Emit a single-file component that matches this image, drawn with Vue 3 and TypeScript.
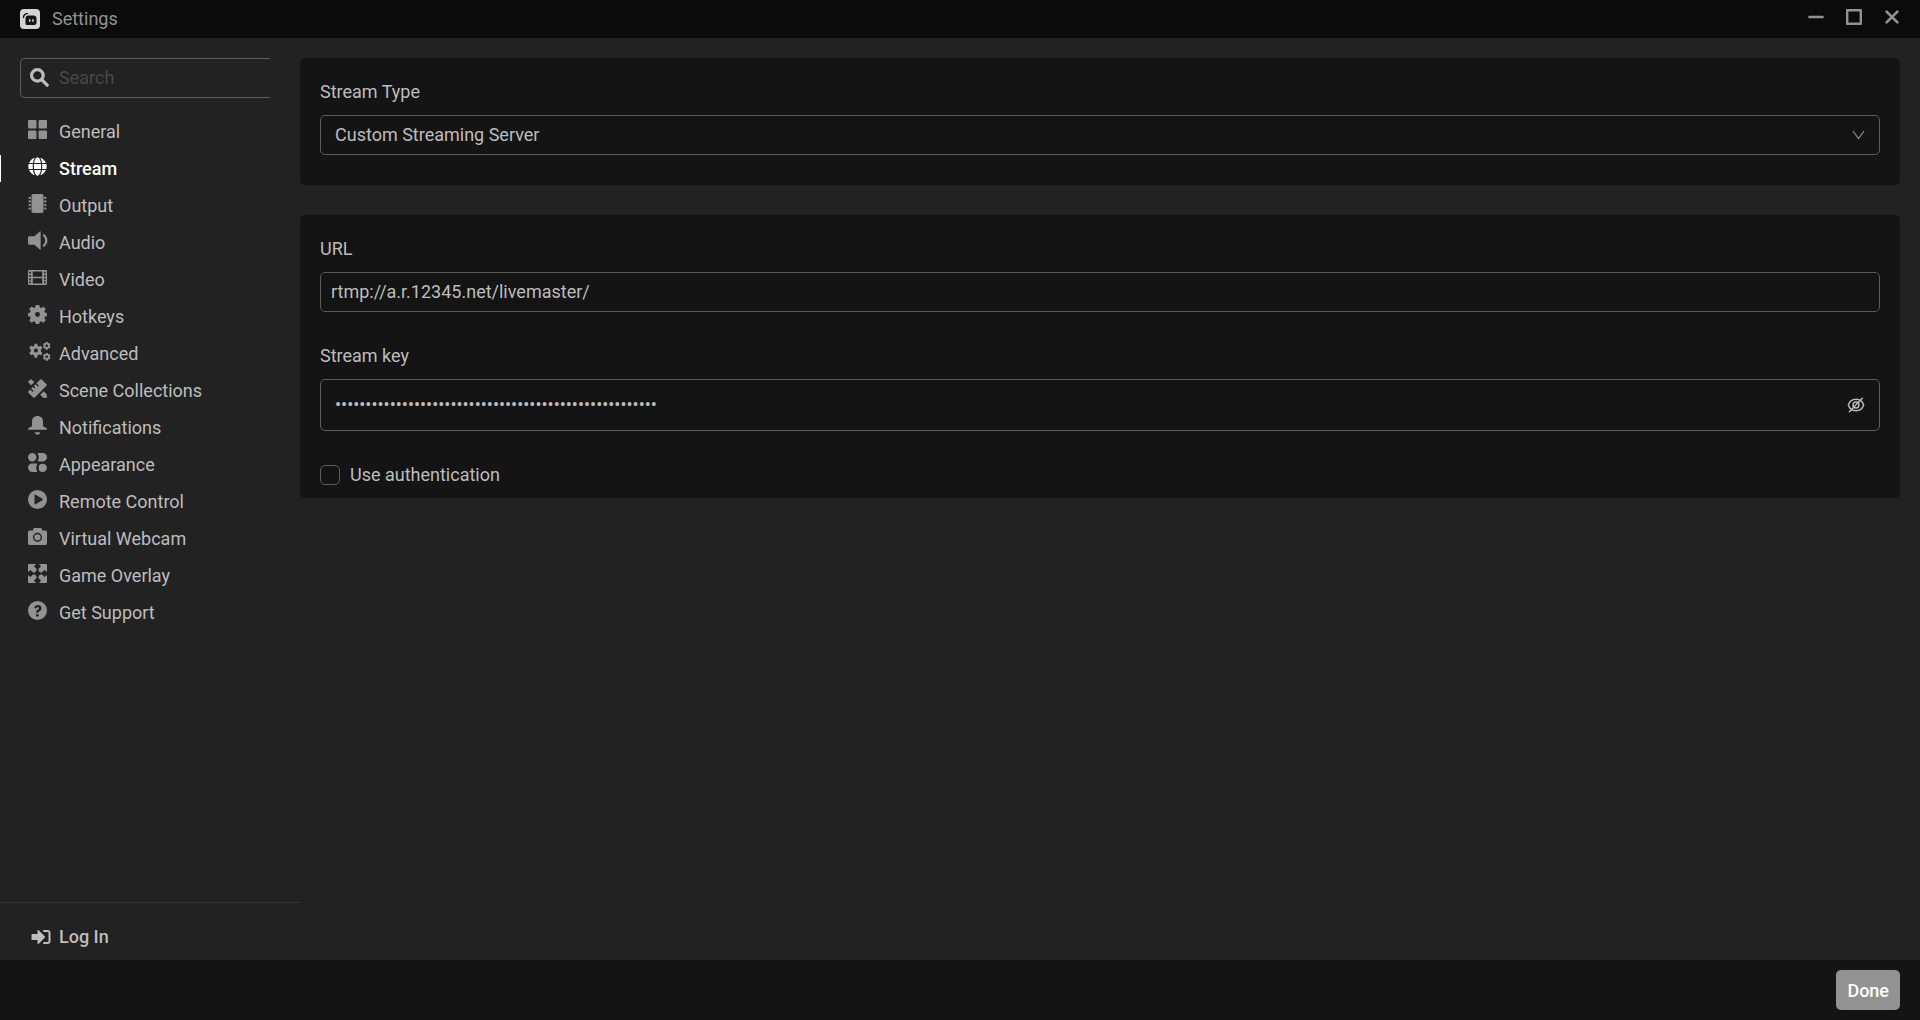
<script setup lang="ts">
import { computed, ref } from 'vue'

interface NavItem {
  label: string
  icon: string
  wide?: boolean
}

const gear =
  'M7.4 0h3.2l.6 2.4 1.3.5 2.1-1.3 2.2 2.2-1.3 2.1.5 1.3 2 .5v2.8l-2 .6-.5 1.4 1.3 2-2.2 2.3-2.1-1.3-1.4.5-.5 2H7.4l-.6-2-1.3-.5-2.1 1.3-2.2-2.2 1.3-2.1-.5-1.4L0 10.500V7.700l2-.6.5-1.300L1.200 3.700l2.200-2.200 2.100 1.300 1.300-.5zM9 6.700a2.300 2.300 0 1 0 0 4.600 2.300 2.300 0 0 0 0-4.600z'

const items: NavItem[] = [
  {
    label: 'General',
    icon: 'M1 0h6a1 1 0 0 1 1 1v6a1 1 0 0 1-1 1H1a1 1 0 0 1-1-1V1a1 1 0 0 1 1-1zM11 0h6a1 1 0 0 1 1 1v6a1 1 0 0 1-1 1h-6a1 1 0 0 1-1-1V1a1 1 0 0 1 1-1zM1 10h6a1 1 0 0 1 1 1v6a1 1 0 0 1-1 1H1a1 1 0 0 1-1-1v-6a1 1 0 0 1 1-1zM11 10h6a1 1 0 0 1 1 1v6a1 1 0 0 1-1 1h-6a1 1 0 0 1-1-1v-6a1 1 0 0 1 1-1z',
  },
  {
    label: 'Stream',
    icon: 'M12.200 5.600C11.800 2.400 10.500.2 9 .2S6.200 2.400 5.800 5.600zM5.600 9c0 .8 0 1.600.1 2.300h6.600a22 22 0 0 0 0-4.600H5.700C5.600 7.400 5.600 8.200 5.600 9zM17 5.600A8.800 8.800 0 0 0 11.500.600c.9 1.200 1.500 3 1.800 5zM6.500.600A8.800 8.800 0 0 0 1 5.600h3.700c.3-2 .9-3.800 1.800-5zM17.400 6.700h-4a23 23 0 0 1 0 4.600h4a9 9 0 0 0 0-4.600zM4.500 9c0-.8 0-1.600.1-2.300h-4a9 9 0 0 0 0 4.600h4C4.500 10.600 4.500 9.800 4.500 9zM5.800 12.400c.4 3.200 1.700 5.400 3.200 5.400s2.800-2.200 3.200-5.400zM11.500 17.400a8.800 8.800 0 0 0 5.500-5h-3.700c-.3 2-.9 3.800-1.800 5zM1 12.400a8.800 8.800 0 0 0 5.500 5c-.9-1.200-1.500-3-1.800-5z',
  },
  {
    label: 'Output',
    icon: 'M5 0h8a1.700 1.700 0 0 1 1.700 1.700v14.600A1.700 1.700 0 0 1 13 18H5a1.700 1.700 0 0 1-1.700-1.700V1.700A1.700 1.700 0 0 1 5 0zM.4 3.300l1-.6h1.200v2H1.400l-1-.6zM.4 6.600l1-.6h1.200v2H1.400l-1-.6zM.4 10l1-.6h1.200v2H1.400l-1-.6zM.4 13.400l1-.6h1.200v2H1.400l-1-.6zM17.600 3.300l-1-.6h-1.200v2h1.200l1-.6zM17.600 6.600l-1-.6h-1.200v2h1.200l1-.6zM17.600 10l-1-.6h-1.200v2h1.200l1-.6zM17.600 13.400l-1-.6h-1.200v2h1.200l1-.6z',
  },
  {
    label: 'Audio',
    icon: 'M11 .7c.6-.7 1-.5 1 .3v16c0 .8-.4 1-1 .4L6 13H1.200A1.200 1.200 0 0 1 0 11.800V6.200A1.200 1.200 0 0 1 1.200 5H6zM13.900 4.600l.9-1.900a7.300 7.300 0 0 1 0 12.600l-.9-1.900a5.300 5.300 0 0 0 0-8.800z',
  },
  {
    label: 'Video',
    icon: 'M1 2h16a1 1 0 0 1 1 1v12a1 1 0 0 1-1 1H1a1 1 0 0 1-1-1V3a1 1 0 0 1 1-1zM1.200 3.500v1.800h1.600V3.500zM1.200 6.600v1.800h1.600V6.600zM1.200 9.700v1.800h1.600V9.700zM1.200 12.800v1.700h1.600v-1.700zM15.200 3.500v1.800h1.600V3.500zM15.200 6.600v1.800h1.600V6.600zM15.200 9.700v1.800h1.600V9.700zM15.200 12.800v1.700h1.600v-1.700zM4.500 3.300v5h9v-5zM4.500 9.600v5.100h9V9.600z',
  },
  { label: 'Hotkeys', icon: gear },
  {
    label: 'Advanced',
    wide: true,
    icon: 'M6.600 1.200h2.600l.4 2 1.500.8 1.900-.7 1.400 2.400-1.500 1.400v2l1.500 1.300-1.400 2.400-1.900-.7-1.500.8-.4 2.300H6.600l-.4-2.300-1.500-.8-1.900.7-1.600-2.400 1.500-1.300v-2L1.200 5.700l1.600-2.400 1.900.7 1.500-.8zM7.900 6.100a2 2 0 1 0 0 4 2 2 0 0 0 0-4zM17.800-.5h1.900l.4 1.300 1.400-.3 1 1.700-1 1.100 1 1.100-1 1.700-1.400-.3-.4 1.400h-1.900l-.5-1.400-1.400.3-1-1.700 1-1.100-1-1.100 1-1.700 1.400.3zM18.700 2a1.300 1.300 0 1 0 0 2.600 1.300 1.300 0 0 0 0-2.600zM17.800 10.500h1.900l.4 1.300 1.400-.3 1 1.700-1 1.100 1 1.100-1 1.700-1.400-.3-.4 1.400h-1.900l-.5-1.400-1.400.3-1-1.700 1-1.100-1-1.100 1-1.700 1.400.3zM18.700 13a1.300 1.300 0 1 0 0 2.600 1.300 1.300 0 0 0 0-2.600z',
  },
  {
    label: 'Scene Collections',
    icon: 'M13 .4 17.600 5a1 1 0 0 1 0 1.300L6.300 17.600a1 1 0 0 1-1.300 0L.4 13a1 1 0 0 1 0-1.300l1.700-1.700 2.300 2.300.9-.9-2.300-2.300L4.600 7.500l1.500 1.500.9-.9-1.500-1.500L7.100 5l2.300 2.300.9-.9L8 4.100 11.700.4a1 1 0 0 1 1.300 0zM3.400.4 6 3 3 6 .4 3.400a1 1 0 0 1 0-1.200L2.200.4a1 1 0 0 1 1.200 0zM15 11.500l2.500 2.600.5 3.100a.8.8 0 0 1-.9.8l-3.100-.5-2.500-2.500z',
  },
  {
    label: 'Notifications',
    icon: 'M9 0c3.200 0 5.200 2.200 5.200 5.200v3.600c0 1 .5 1.600 2 2 1.100.3 1.800.8 1.800 1.500 0 .5-.3.700-.8.700H.8c-.5 0-.8-.2-.8-.7 0-.7.7-1.200 1.800-1.500 1.500-.4 2-1 2-2V5.200C3.800 2.200 5.800 0 9 0zM6.200 15.500h5.600c-.5 1.500-1.500 2.300-2.800 2.300s-2.300-.8-2.800-2.300z',
  },
  {
    label: 'Appearance',
    icon: 'M4 0a4 4 0 1 1 0 8 4 4 0 0 1 0-8zM10 0h4a4 4 0 0 1 0 8h-4c-.7 0-1-.5-.6-1.100 1.200-1.900 1.200-3.900 0-5.800C9 .5 9.300 0 10 0zM14 10.200a3.900 3.900 0 1 1 0 7.800 3.900 3.900 0 0 1 0-7.800zM8 10H4a4 4 0 0 0 0 8h4c.7 0 1-.5.600-1.100-1.200-1.900-1.200-3.900 0-5.800.4-.6.1-1.100-.6-1.100z',
  },
  {
    label: 'Remote Control',
    icon: 'M9 0a9 9 0 1 1 0 18A9 9 0 0 1 9 0zM6.200 5v8c0 .6.500.9 1 .6l6.400-4c.5-.3.5-.9 0-1.200l-6.400-4c-.5-.3-1 0-1 .6z',
  },
  {
    label: 'Virtual Webcam',
    icon: 'M5.500 1h7l1 2.300h3A1.500 1.500 0 0 1 18 4.800v10.700a1.500 1.500 0 0 1-1.500 1.500h-15A1.500 1.500 0 0 1 0 15.500V4.800a1.500 1.500 0 0 1 1.500-1.500h3zM9 5.500a4.300 4.300 0 1 0 0 8.600 4.300 4.300 0 0 0 0-8.600zM9 6.800a3 3 0 1 1 0 6 3 3 0 0 1 0-6z',
  },
  {
    label: 'Game Overlay',
    icon: 'M1 0h6.500L5.700 2.300 8 4.600v1.700L6.400 8H4.700L2.400 5.600 0 7.500V1a1 1 0 0 1 1-1zM17 0a1 1 0 0 1 1 1v6.500l-2.400-1.900L13.300 8h-1.700L10 6.300V4.600l2.300-2.300L10.500 0zM0 10.500l2.400 1.900L4.700 10h1.700L8 11.700v1.700l-2.300 2.300L7.500 18H1a1 1 0 0 1-1-1zM18 10.500V17a1 1 0 0 1-1 1h-6.500l1.800-2.300-2.300-2.300v-1.700l1.600-1.700h1.700l2.300 2.400z',
  },
  {
    label: 'Get Support',
    icon: 'M9 0a9 9 0 1 1 0 18A9 9 0 0 1 9 0zM5.800 6.200l1.600 1.200C8 6.500 8.500 6 9.200 6c.6 0 1.100.3 1.100.9 0 .6-.4.900-1.200 1.400-.9.500-1.400 1.100-1.400 2.200v.6h2.300v-.4c0-.6.400-.8 1.200-1.300 1-.6 1.600-1.400 1.600-2.600C12.800 5 11.200 3.800 9.300 3.800c-1.600 0-2.700.8-3.500 2.400zM8.900 12.200a1.400 1.400 0 1 0 0 2.800 1.400 1.400 0 0 0 0-2.800z',
  },
]

const active = ref('Stream')
const search = ref('')
const streamType = ref('Custom Streaming Server')
const url = ref('rtmp://a.r.12345.net/livemaster/')
const streamKey = ref('x'.repeat(53))
const showKey = ref(false)
const useAuth = ref(false)
const keyType = computed(() => (showKey.value ? 'text' : 'password'))
</script>

<template>
  <div class="window">
    <header class="titlebar">
      <svg class="logo" viewBox="0 0 20 20" aria-hidden="true">
        <rect width="20" height="20" rx="4" fill="#d4d4d4" />
        <path d="M3.500 8.500C3.600 6 5 4.700 7.500 4.600" fill="none" stroke="#0b0b0b" stroke-width="1.300" stroke-linecap="round" />
        <path d="M8.500 6.500h5a3 3 0 0 1 3 3v4a2.500 2.500 0 0 1-2.500 2.500H7.300c-1.300 0-1.900-.8-1.800-1.800V9.500a3 3 0 0 1 3-3z" fill="#141414" />
        <rect x="9" y="10" width="1.500" height="3" rx=".7" fill="#d4d4d4" />
        <rect x="12.200" y="10" width="1.500" height="3" rx=".7" fill="#d4d4d4" />
      </svg>
      <span class="title">Settings</span>
      <div class="controls">
        <button type="button" aria-label="Minimize">
          <svg viewBox="0 0 16 16"><path d="M1.500 8h13" stroke-width="2.600" stroke-linecap="round" /></svg>
        </button>
        <button type="button" aria-label="Maximize">
          <svg viewBox="0 0 16 16"><path d="M1.200 1.200h13.600v13.600H1.200z" stroke-width="2.400" stroke-linejoin="round" /></svg>
        </button>
        <button type="button" aria-label="Close">
          <svg viewBox="0 0 16 16"><path d="M2.600 2.600l10.800 10.800M13.400 2.600L2.600 13.400" stroke-width="2.700" stroke-linecap="round" /></svg>
        </button>
      </div>
    </header>

    <div class="body">
      <aside class="sidebar">
        <label class="search">
          <svg viewBox="0 0 18 18" aria-hidden="true">
            <circle cx="7" cy="7" r="5.500" />
            <path d="M11.300 11.300l5 5" />
          </svg>
          <input v-model="search" type="text" placeholder="Search" aria-label="Search" />
        </label>
        <nav class="nav">
          <a
            v-for="item in items"
            :key="item.label"
            href="#"
            :class="{ active: item.label === active }"
            @click.prevent="active = item.label"
          >
            <svg :class="{ wide: item.wide }" :viewBox="item.wide ? '0 0 23 18' : '0 0 18 18'" aria-hidden="true">
              <path :d="item.icon" fill-rule="evenodd" />
            </svg>
            <span>{{ item.label }}</span>
          </a>
        </nav>
        <button class="login" type="button">
          <svg viewBox="0 0 19 16" aria-hidden="true">
            <path d="M.8 5H6V1.800c0-.8.700-1 1.200-.5l6 6c.4.400.4 1 0 1.400l-6 6c-.5.500-1.200.3-1.200-.5V11H.8a.8.800 0 0 1-.8-.8V5.800A.8.800 0 0 1 .8 5z" />
            <path d="M12.500 2H16a2 2 0 0 1 2 2v8a2 2 0 0 1-2 2h-3.500" fill="none" stroke="currentColor" stroke-width="2" stroke-linecap="round" />
          </svg>
          <span>Log In</span>
        </button>
      </aside>

      <main class="content">
        <section class="panel">
          <div class="field">
            <label for="stream-type">Stream Type</label>
            <div class="box">
              <select id="stream-type" v-model="streamType">
                <option>Custom Streaming Server</option>
                <option>Streaming Services</option>
              </select>
              <svg class="chevron" viewBox="0 0 12 10" aria-hidden="true"><path d="M.5 1L6 8.500 11.500 1" /></svg>
            </div>
          </div>
        </section>

        <section class="panel auth">
          <div class="field">
            <label for="url">URL</label>
            <div class="box">
              <input id="url" v-model="url" class="url" type="text" />
            </div>
          </div>
          <div class="field">
            <label for="stream-key">Stream key</label>
            <div class="box tall">
              <input id="stream-key" v-model="streamKey" :type="keyType" />
              <button class="reveal" type="button" aria-label="Show stream key" @click="showKey = !showKey">
                <svg viewBox="0 0 18 16">
                  <path d="M1.300 8C2.600 4.200 5.500 2.300 9 2.300S15.400 4.200 16.700 8c-1.300 3.800-4.200 5.700-7.700 5.700S2.600 11.800 1.300 8z" />
                  <circle cx="9" cy="8" r="3" />
                  <path d="M2 15.200L15.700.8" />
                </svg>
              </button>
            </div>
          </div>
          <label class="check">
            <input v-model="useAuth" type="checkbox" />
            <span>Use authentication</span>
          </label>
        </section>
      </main>
    </div>

    <footer class="footer">
      <button class="done" type="button">Done</button>
    </footer>
  </div>
</template>

<style>
body {
  background: #222222;
}
</style>

<style scoped>
* {
  box-sizing: border-box;
}

.window {
  display: flex;
  flex-direction: column;
  min-height: 100vh;
  background: #222222;
  color: #bdbdbd;
  font-family: Roboto, 'Liberation Sans', sans-serif;
  font-size: 18px;
  line-height: 27px;
}

button,
input,
select {
  margin: 0;
  padding: 0;
  border: 0;
  background: none;
  color: inherit;
  font: inherit;
}

.titlebar {
  display: flex;
  align-items: center;
  height: 38px;
  padding: 0 20px;
  background: #0b0b0b;
  color: #929292;
}

.logo {
  width: 20px;
  height: 20px;
  margin-right: 12px;
}

.title {
  padding-bottom: 2px;
}

.controls {
  display: flex;
  gap: 22px;
  margin-left: auto;
  padding-bottom: 4px;
}

.controls button {
  display: flex;
}

.controls svg {
  width: 16px;
  height: 16px;
  fill: none;
  stroke: #929292;
}

.body {
  display: flex;
  flex: 1;
}

.sidebar {
  display: flex;
  flex-direction: column;
  width: 300px;
  flex-shrink: 0;
  padding-top: 20px;
}

.search {
  display: flex;
  align-items: center;
  gap: 10px;
  height: 40px;
  margin: 0 30px 20px 20px;
  padding: 0 0 2px 9px;
  border: 1px solid #5c5c5c;
  border-right: 0;
  border-radius: 5px 0 0 5px;
}

.search svg {
  width: 19px;
  height: 19px;
  fill: none;
  stroke: #bdbdbd;
  stroke-width: 3;
  stroke-linecap: round;
}

.search input {
  flex: 1;
  min-width: 0;
  outline: 0;
}

.search input::placeholder {
  color: #474747;
  opacity: 1;
}

.nav {
  display: flex;
  flex-direction: column;
  gap: 10px;
}

.nav a {
  display: flex;
  align-items: flex-start;
  height: 27px;
  padding-left: 27px;
  border-left: 1px solid transparent;
  color: inherit;
  text-decoration: none;
}

.nav svg {
  width: 19px;
  height: 19px;
  margin: 2px 12px 0 0;
  fill: #929292;
  overflow: visible;
}

.nav svg.wide {
  width: 23px;
  margin-right: 8px;
}

.nav .active {
  border-color: #ffffff;
  color: #ffffff;
  font-weight: 500;
}

.nav .active svg {
  fill: #ffffff;
}

.login {
  display: flex;
  align-items: center;
  gap: 8px;
  height: 58px;
  margin-top: auto;
  padding: 10px 31px 0;
  border-top: 1px solid #343434;
  font-weight: 500;
}

.login svg {
  width: 20px;
  height: 16px;
  fill: currentColor;
}

.content {
  display: flex;
  flex: 1;
  flex-direction: column;
  gap: 30px;
  min-width: 0;
  padding: 20px 20px 20px 0;
}

.panel {
  display: flex;
  flex-direction: column;
  gap: 30px;
  padding: 20px 20px 30px;
  border-radius: 5px;
  background: #141414;
}

.panel.auth {
  padding-bottom: 10px;
}

.field {
  display: flex;
  flex-direction: column;
  gap: 10px;
}

.box {
  display: flex;
  align-items: center;
  position: relative;
  height: 40px;
  border: 1px solid #5c5c5c;
  border-radius: 5px;
}

.box.tall {
  height: 52px;
}

.box input,
.box select {
  flex: 1;
  min-width: 0;
  height: 100%;
  padding: 0 14px 2px;
  outline: 0;
  appearance: none;
}

.box option {
  background: #141414;
}

.box .url {
  padding: 0 10px 2px;
}

.chevron {
  position: absolute;
  right: 14px;
  width: 13px;
  height: 10px;
  fill: none;
  stroke: #929292;
  stroke-width: 1.2;
  pointer-events: none;
}

.reveal {
  display: flex;
  margin-right: 14px;
}

.reveal svg {
  width: 18px;
  height: 16px;
  fill: none;
  stroke: #bdbdbd;
  stroke-width: 1.4;
}

.check {
  display: flex;
  align-items: center;
  gap: 10px;
  align-self: flex-start;
}

.check input {
  width: 20px;
  height: 20px;
  border: 1px solid #5c5c5c;
  border-radius: 5px;
  appearance: none;
}

.check input:checked {
  background: #929292;
}

.footer {
  display: flex;
  align-items: center;
  justify-content: flex-end;
  height: 60px;
  padding: 0 20px;
  background: #141414;
}

.done {
  height: 40px;
  padding: 0 11px;
  border-radius: 5px;
  background: #929292;
  color: #ffffff;
  font-weight: 500;
}
</style>
